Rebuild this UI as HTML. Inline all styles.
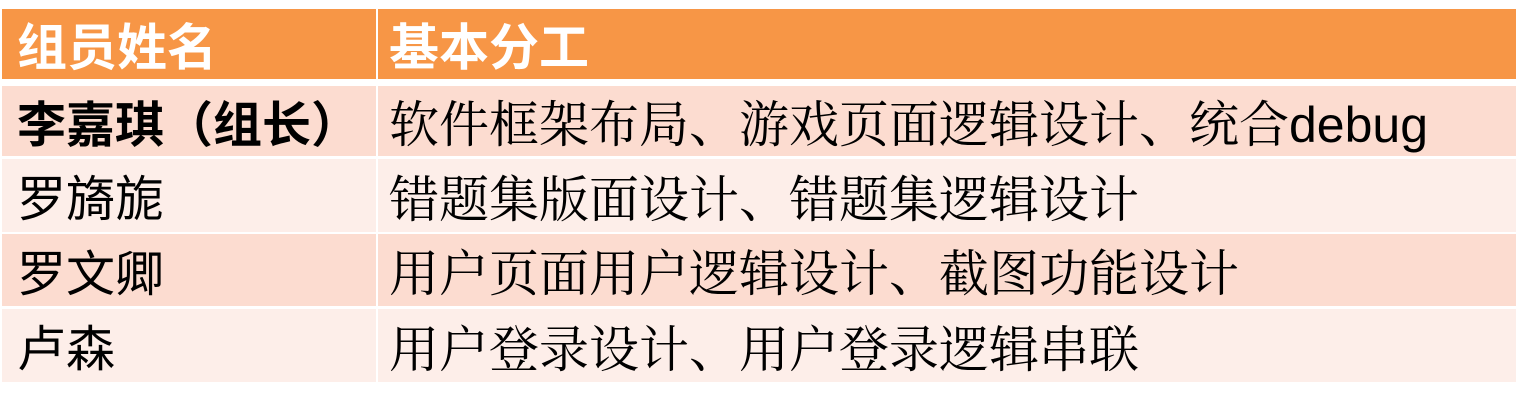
<!DOCTYPE html>
<html><head><meta charset="utf-8"><style>
html,body{margin:0;padding:0;background:#fff;width:1521px;height:406px;overflow:hidden}
.c{position:absolute;box-sizing:border-box;display:flex;align-items:center;font-size:49px;white-space:nowrap}
.n{left:2px;width:374px;padding-left:15px;font-family:"Liberation Sans","Noto Sans CJK SC",sans-serif;color:#000}
.t{left:378px;width:1138px;padding-left:11px;font-size:50px;font-family:"Liberation Sans","Noto Serif CJK SC",serif;color:#000}
.h{background:#F79646;color:#fff;font-weight:bold;font-family:"Liberation Sans","Noto Sans CJK SC",sans-serif;font-size:50px}
.d{background:#FCDCD0}
.l{background:#FDEEE9}
</style></head><body>
<div class="c n h" style="top:9px;height:70px">组员姓名</div>
<div class="c t h" style="top:9px;height:70px;font-family:'Liberation Sans','Noto Sans CJK SC',sans-serif">基本分工</div>
<div class="c n d" style="top:86px;height:70px;font-weight:bold">李嘉琪（组长）</div>
<div class="c t d" style="top:86px;height:70px">软件框架布局、游戏页面逻辑设计、统合debug</div>
<div class="c n l" style="top:159px;height:73px">罗旖旎</div>
<div class="c t l" style="top:159px;height:73px">错题集版面设计、错题集逻辑设计</div>
<div class="c n d" style="top:234px;height:72px">罗文卿</div>
<div class="c t d" style="top:234px;height:72px">用户页面用户逻辑设计、截图功能设计</div>
<div class="c n l" style="top:309px;height:73px">卢森</div>
<div class="c t l" style="top:309px;height:73px">用户登录设计、用户登录逻辑串联</div>
</body></html>
